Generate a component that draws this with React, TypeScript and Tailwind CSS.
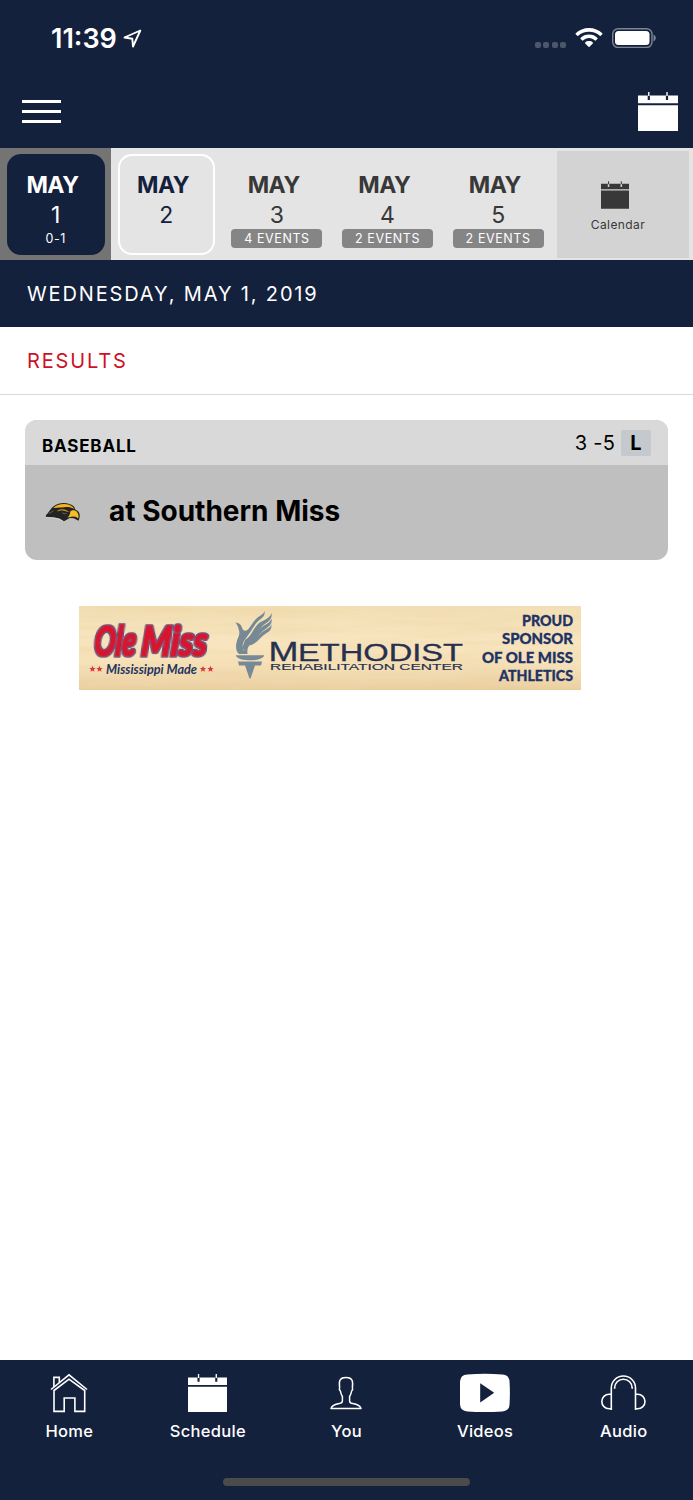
import type { ReactNode } from 'react'
import clsx from 'clsx'

type Day = {
  month: string
  day: number
  note?: string
  state?: 'selected' | 'today'
}

const days: Day[] = [
  { month: 'MAY', day: 1, note: '0-1', state: 'selected' },
  { month: 'MAY', day: 2, state: 'today' },
  { month: 'MAY', day: 3, note: '4 EVENTS' },
  { month: 'MAY', day: 4, note: '2 EVENTS' },
  { month: 'MAY', day: 5, note: '2 EVENTS' },
]

function CalendarIcon({ className }: { className?: string }) {
  return (
    <svg viewBox="0 0 40 39" className={className} fill="currentColor" aria-hidden>
      <path d="M0 3.500h9.700V8h2.200V3.500h16V8h2.200V3.500H40v7.700H0zM0 13.200h40V39H0z" />
      <path d="M10.100 0h1.400v4h-1.400zM28.300 0h1.400v4h-1.400z" />
    </svg>
  )
}

function HomeIcon() {
  return (
    <svg width="40" height="40" viewBox="0 0 40 40" fill="none" stroke="white" strokeWidth="1.6" aria-hidden>
      <path d="M2 16.500 20 1.800l18 14.700M5 17.500V38.400h10.200V25h10.700v13.400h9.800V17.500L20 6.200z" />
      <path d="M4.900 14V4.400h5.400v5.200" />
    </svg>
  )
}

function PersonIcon() {
  return (
    <svg width="34" height="40" viewBox="0 0 34 40" fill="none" stroke="white" strokeWidth="1.500" strokeLinejoin="round" aria-hidden>
      <path d="M2 35.500h30c-.8-2.800-4-4.300-8.300-5-2.200-.4-3.100-1.100-3.100-2.600v-4.400c1-1.700 1.700-3.400 2-5.500.9-.8 1.300-2.200.8-3.600.6-5.200.9-9.900-6.400-9.900s-7 4.700-6.400 9.900c-.5 1.400-.1 2.800.8 3.600.3 2.100 1 3.800 2 5.500v4.400c0 1.500-.9 2.200-3.100 2.600-4.300.7-7.500 2.200-8.300 5z" />
    </svg>
  )
}

function VideoIcon() {
  return (
    <svg width="51" height="40" viewBox="0.7 0 51 40" aria-hidden>
      <path d="M8 1.400Q25.500.3 43 1.400 49.700 1.800 50.200 8 51 20 50.200 32 49.700 38 43 38.400q-17.500 1.100-35 0Q1.300 38 .8 32 0 20 .8 8 1.300 1.800 8 1.400z" fill="white" />
      <path d="m20.900 10.200 14 9.600-14 9.600z" fill="#14213d" />
    </svg>
  )
}

function AudioIcon() {
  return (
    <svg width="46" height="40" viewBox="0.600 0 46 40" fill="none" stroke="white" strokeWidth="1.600" aria-hidden>
      <path d="M10.900 37V15a12.100 12 0 0 1 24.200 0V37" />
      <path d="M14.200 15.800V15a8.800 8.800 0 0 1 17.600 0v.8" />
      <path d="M10.900 21.200H8.700a7.200 7.200 0 0 0 0 14.600h2.200M35.100 21.200h2.200a7.200 7.200 0 0 1 0 14.600h-2.200" />
    </svg>
  )
}

function StatusBar() {
  return (
    <div className="flex h-[76px] items-center pl-[51px] pr-[37px] text-white">
      <span className="text-[27px] font-semibold leading-none">11:39</span>
      <svg width="19" height="19" viewBox="0 0 19 19" className="ml-[6px]" fill="none" stroke="white" strokeWidth="1.900" strokeLinejoin="round" aria-hidden>
        <path d="M17.300 1.500 1.500 8.500l7.800 1.200.7 7.800z" />
      </svg>
      <div className="ml-auto mt-[13px] flex gap-[2.300px]">
        {[0, 1, 2, 3].map((i) => (
          <span key={i} className="size-[6px] rounded-[2px] bg-[#4d566b]" />
        ))}
      </div>
      <svg width="28" height="20" viewBox="0 0 28 20" className="ml-[9px]" fill="white" aria-hidden>
        <path d="M14 0C8.800 0 4.200 2 .7 5.300c-.3.300-.3.600 0 .9l1.600 1.600c.3.300.6.300.9 0C6 5.100 9.800 3.700 14 3.700s8 1.400 10.800 4.100c.3.300.6.300.9 0l1.600-1.600c.3-.3.300-.6 0-.9C23.800 2 19.200 0 14 0z" />
        <path d="M14 6.600c-3.300 0-6.300 1.200-8.500 3.300-.3.300-.3.600 0 .9l1.700 1.700c.2.200.6.200.9 0C9.700 11 11.700 10.100 14 10.100s4.300.9 5.900 2.400c.3.200.7.200.9 0l1.700-1.700c.3-.3.300-.6 0-.9-2.200-2.100-5.200-3.300-8.500-3.300z" />
        <path d="M14 13.100c-1.500 0-2.800.5-3.800 1.400-.3.300-.3.600 0 .9l3.300 3.300c.3.300.7.300 1 0l3.300-3.300c.3-.3.300-.6 0-.9-1-.9-2.300-1.400-3.800-1.400z" />
      </svg>
      <svg width="44" height="20" viewBox="0 0 44 20" className="ml-[9px]" aria-hidden>
        <rect x=".7" y=".7" width="39.300" height="18.800" rx="5.500" fill="none" stroke="#7d8495" strokeWidth="1.400" />
        <rect x="3" y="3" width="34.500" height="14" rx="3.500" fill="white" />
        <path d="M41.500 6.500c3 1.500 3 5.500 0 7z" fill="#7d8495" />
      </svg>
    </div>
  )
}

function DayCell({ month, day, note, state }: Day) {
  return (
    <div
      className={clsx(
        'flex h-[112px] w-[110.6px] shrink-0 pl-[7px] pt-1.5',
        state === 'selected' && 'bg-[#747474]',
      )}
    >
      <div
        className={clsx(
          'flex h-[101px] w-[97.500px] flex-col items-center rounded-[14px] border-2',
          state === 'selected' && 'border-[#14213d] bg-[#14213d] text-white',
          state === 'today' && 'border-white text-[#14213d]',
          !state && 'border-transparent text-[#383838]',
        )}
      >
        <span className="mr-[6.500px] mt-[15px] text-[23px] font-bold leading-7 tracking-[-0.500px]">{month}</span>
        <span className="mt-[2px] text-[23px] leading-7">{day}</span>
        {note && (
          <span
            className={clsx(
              'flex h-[19px] shrink-0 items-center justify-center rounded-[4px] text-[12.500px] tracking-[0.600px]',
              state ? 'mt-[1px]' : 'w-[91px] bg-[#858585] pt-px text-white',
            )}
          >
            {note}
          </span>
        )}
      </div>
    </div>
  )
}

function EagleLogo() {
  return (
    <svg width="36" height="20" viewBox="0 0 36 20" aria-hidden>
      <path d="M.8 13.200C4 10.500 5 7.500 8 4.800 13-.2 24-.2 29 4.500l1.500 3.200c4.500 1.300 5.300 6.300 3 11l-4.800-2.500-4-.2-5.700 3.200-4.500-2.700-6-1.300L1 15z" fill="#242323" />
      <path d="M8.200 6C13 .8 24 .6 28.200 5.300L29 7c-3.500-2.200-7-2.200-10-1.700-3 .2-5.500.3-10.800.7z" fill="#f3b51d" />
      <path d="M12.500 8.500c3-1.500 6.500-1.600 9-.2 1.300.8 2.500 1 3.500.7-2.500 1.600-5.500-.1-7.500-.4-1.800-.2-3.200.1-5 1z" fill="#c4931d" />
      <path d="M25.200 9.800c2-2.200 5.200-1.700 7 .4 1.500 1.800 1.600 4.200 1 6.400-1.300-1.700-3.200-2.400-5.500-2.100l-5.200.9c1.900-1.300 2.600-3.300 2.700-5.600z" fill="#f9bd24" />
      <path d="m4 11.500 4.500-2.700M17 10.500l2 1.300 2.500-.3" stroke="#8a8275" strokeWidth=".6" fill="none" />
      <path d="m1.500 15.200 6.500.7 6 1.200 4 2.200" stroke="#e6e2da" strokeWidth=".5" fill="none" />
    </svg>
  )
}

// Sponsor ad: both brand marks and the tagline on a pale wood board
function SponsorBanner() {
  const tagline = [
    { text: 'PROUD', y: 19.500, width: 51 },
    { text: 'SPONSOR', y: 38, width: 71 },
    { text: 'OF OLE MISS', y: 56.500, width: 91 },
    { text: 'ATHLETICS', y: 75, width: 74 },
  ]
  return (
    <svg width="502" height="84" viewBox="0 0 502 84" role="img" aria-label="Methodist Rehabilitation Center">
      <defs>
        <linearGradient id="wood" x1="0" y1="0" x2="0" y2="1">
          <stop offset="0" stopColor="#f3dfb4" />
          <stop offset=".4" stopColor="#f8e5bf" />
          <stop offset=".7" stopColor="#f6e1b8" />
          <stop offset="1" stopColor="#ebd0a2" />
        </linearGradient>
        <filter id="grain" x="0" y="0" width="1" height="1">
          <feTurbulence type="fractalNoise" baseFrequency=".009 .1" numOctaves="3" seed="8" />
          <feColorMatrix values="0 0 0 0 .72  0 0 0 0 .52  0 0 0 0 .25  .8 0 0 0 -.3" />
        </filter>
        <filter id="outline" x="-.1" y="-.1" width="1.2" height="1.2">
          <feMorphology in="SourceAlpha" operator="dilate" radius="1" result="edge" />
          <feFlood floodColor="#55547f" />
          <feComposite in2="edge" operator="in" />
          <feMerge>
            <feMergeNode />
            <feMergeNode in="SourceGraphic" />
          </feMerge>
        </filter>
      </defs>
      <rect width="502" height="84" fill="url(#wood)" />
      <rect width="502" height="84" filter="url(#grain)" opacity=".5" />

      <g
        transform="translate(3 0) skewX(-4)"
        filter="url(#outline)"
        fontFamily="Lato, sans-serif"
        fontStyle="italic"
        fontWeight="900"
        fontSize="42"
        fill="#d5152e"
        stroke="#d5152e"
        strokeWidth="1.500"
        strokeLinejoin="round"
      >
        <text x="15" y="50" textLength="42" lengthAdjust="spacingAndGlyphs">Ole</text>
        <text x="62" y="50" textLength="66" lengthAdjust="spacingAndGlyphs">Miss</text>
      </g>
      <text x="27" y="68" textLength="91" lengthAdjust="spacingAndGlyphs" fontFamily="Lato, sans-serif" fontStyle="italic" fontWeight="700" fontSize="13.500" fill="#243461">
        Mississippi Made
      </text>
      <g fill="#d9343f">
        {[13.500, 20.500, 124, 131.500].map((x) => (
          <path key={x} transform={`translate(${x} 63)`} d="m0-3.200.9 2.100 2.300.1-1.800 1.500.6 2.300-2-1.300-2 1.300.6-2.300L-3.200-1l2.300-.1z" />
        ))}
      </g>

      {/* Torch: winged flame, bowl and handle */}
      <g fill="#788996">
        <path d="M156.500 16.500c3.500.3 5.500 2 6.500 5 1 3.500 3.500 4.500 6.500 1.500 4-5 6-10 12-13.500 2.200-1.300 3.600-2.500 4-4.500.8 3.500-.8 6-4 8.200-4.500 3-7 7.800-9.500 11.800l-7 10c-2.500 4.500-1.500 9 2 13h-7c-3-2.500-3.500-7-2.500-11.500 1-5 4-8 2.500-12-.5-2.500-1.500-5.500-3.500-8z" />
        <path d="M166 34c8-5 8-13 15.500-18 6-3 10-5 11-9 1 4.500-1.500 7.500-6 10.500-7.500 4.500-7.500 12-14.500 19.500l-6 6.500h-3.500z" />
        <path d="M168 36c8-4 8.500-11 15.500-15.500 4-2.500 8-4.500 9-8 1 5-1.500 7.500-6 10.500-6.500 4-7.500 9.500-13 13.500-4.500 3.500-5.500 6-5 11.500h-5z" />
        <path d="M170 37.500c7-4 9.500-9.500 15.500-13 3.500-2 6-3.500 7-6 .3 4.500-1.500 6.500-5 8.500-6 3.500-9 10-16 12.500zM157 49.300h28v1c-3 3-7 4-14 4s-11-1-14-4zM159 55.500h24l-1 4h-6l-4.500 13h-1l-4.500-13h-6z" />
      </g>

      <g fontFamily="'Liberation Sans', sans-serif" fill="#27304f" stroke="#27304f" strokeWidth=".3">
        <text x="189.500" y="54.500" fontSize="27.500" textLength="30" lengthAdjust="spacingAndGlyphs">M</text>
        <text x="219" y="54.500" fontSize="23" textLength="165" lengthAdjust="spacingAndGlyphs">ETHODIST</text>
        <text x="191" y="64" fontSize="8.500" textLength="193" lengthAdjust="spacingAndGlyphs" strokeWidth=".15">
          REHABILITATION CENTER
        </text>
      </g>

      <g fontFamily="Lato, sans-serif" fontWeight="900" fontSize="15" fill="#213365" stroke="#213365" strokeWidth=".3">
        {tagline.map((line) => (
          <text key={line.text} x={494 - line.width} y={line.y} textLength={line.width} lengthAdjust="spacingAndGlyphs">
            {line.text}
          </text>
        ))}
      </g>
    </svg>
  )
}

const tabs: { label: string; icon: ReactNode }[] = [
  { label: 'Home', icon: <HomeIcon /> },
  { label: 'Schedule', icon: <CalendarIcon className="mt-px h-[38px] w-[39px]" /> },
  { label: 'You', icon: <PersonIcon /> },
  { label: 'Videos', icon: <VideoIcon /> },
  { label: 'Audio', icon: <AudioIcon /> },
]

export default function App() {
  return (
    <div className="flex h-[1500px] w-[693px] flex-col overflow-hidden bg-white font-['Inter',sans-serif]">
      <header className="h-[148px] shrink-0 bg-[#14213d]">
        <StatusBar />
        <div className="flex items-start justify-between pl-[22px] pr-[15px] pt-4 text-white">
          <button aria-label="Menu" className="mt-[7.500px] flex w-[39px] flex-col gap-[7px]">
            <span className="h-[3px] bg-white" />
            <span className="h-[3px] bg-white" />
            <span className="h-[3px] bg-white" />
          </button>
          <CalendarIcon className="h-[39px] w-[40px]" />
        </div>
      </header>

      {/* Day strip */}
      <div className="flex h-[112px] shrink-0 bg-[#e4e4e4]">
        {days.map((d) => (
          <DayCell key={d.day} {...d} />
        ))}
        <div className="ml-[4px] mt-[3px] flex h-[107px] w-[132px] flex-col items-center bg-[#d3d3d3] text-[#383838]">
          <CalendarIcon className="mr-[16px] mt-[30px] h-[28px] w-[28px]" />
          <span className="mr-[10px] mt-[8px] text-[12px] leading-4 tracking-[0.400px]">Calendar</span>
        </div>
      </div>

      <h1 className="flex h-[67px] shrink-0 items-center bg-[#14213d] pl-[27px] text-[20px] tracking-[1.850px] text-white">
        WEDNESDAY, MAY 1, 2019
      </h1>
      <h2 className="flex h-[68px] shrink-0 items-center border-b border-[#d9d9d9] pl-[27px] text-[20px] tracking-[1.850px] text-[#ce1126]">
        RESULTS
      </h2>

      <main className="flex-1">
        <section className="ml-[25px] mt-[25px] h-[140px] w-[643px] overflow-hidden rounded-[12px] bg-[#bfbfbf]">
          <div className="flex h-[45px] items-center bg-[#d9d9d9] pl-[17px] pr-[17px] text-black">
            <h3 className="mt-[8px] text-[17px] font-bold tracking-[0.800px]">BASEBALL</h3>
            <span className="ml-auto text-[20px] tracking-[0.200px]">3 -5</span>
            <span className="ml-[6px] flex h-[26px] w-[30px] items-center justify-center rounded-[2px] bg-[#c4c9cd] text-[20px] font-bold">
              L
            </span>
          </div>
          <div className="flex h-[91px] items-center pl-5">
            <div className="mt-[3px] w-[64px]">
              <EagleLogo />
            </div>
            <p className="text-[28px] font-bold text-black">at Southern Miss</p>
          </div>
        </section>
        <div className="ml-[79px] mt-[46px]">
          <SponsorBanner />
        </div>
      </main>

      <footer className="flex h-[140px] shrink-0 flex-col items-center bg-[#14213d] text-white">
        <nav className="grid w-full grid-cols-5 pt-[13px]">
          {tabs.map(({ label, icon }) => (
            <a key={label} className="flex flex-col items-center">
              <span className="flex h-10 items-start justify-center">{icon}</span>
              <span className="mt-[6px] text-[16.500px] font-medium leading-6 tracking-[0.300px]">{label}</span>
            </a>
          ))}
        </nav>
        <div className="mt-[35px] h-[8px] w-[247px] rounded-full bg-[#4b4b4b]" />
      </footer>
    </div>
  )
}
